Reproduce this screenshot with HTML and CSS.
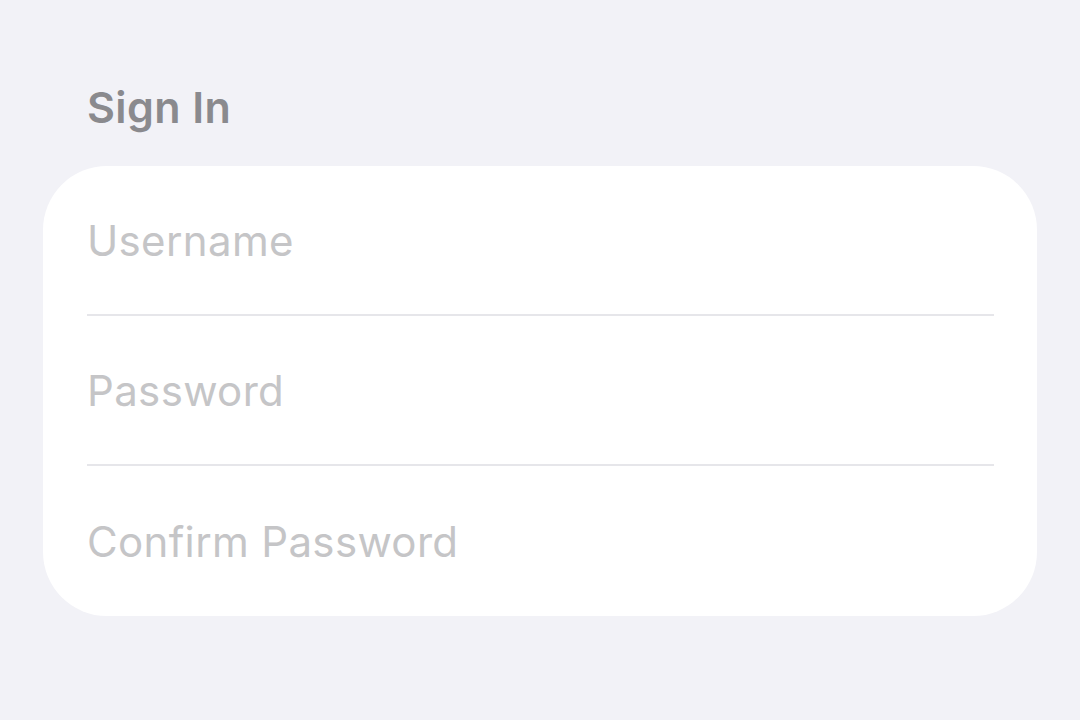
FILE: index.html
```html
<!DOCTYPE html>
<html lang="en">
<head>
  <meta charset="UTF-8">
  <meta name="viewport" content="width=device-width, initial-scale=1.0">
  <title>Sign In</title>
  <link rel="stylesheet" href="styles.css">
</head>
<body>

  <section class="form-section">
    <h2 class="section-title">Sign In</h2>

    <div class="card">
      <div class="row">
        <input type="text" id="username" placeholder="Username">
      </div>
      <div class="row">
        <input type="password" id="password" placeholder="Password">
      </div>
      <div class="row">
        <input type="password" id="confirm" placeholder="Confirm Password">
      </div>
    </div>
  </section>

</body>
</html>
```

FILE: styles.css
```css
body {
  font-family: 'Inter', 'Liberation Sans', sans-serif;
  background: #f2f2f7;
  color: #000;
  margin: 0;
  padding: 0;
}

.form-section {
  padding: 83px 43px 0;
}

.section-title {
  margin: 0 0 35px 44px;
  font-size: 43px;
  line-height: 48px;
  font-weight: 600;
  color: #8a8a8e;
  letter-spacing: 0.4px;
}

.card {
  background: #fff;
  border-radius: 64px;
  overflow: hidden;
}

.row {
  display: flex;
  align-items: center;
  height: 148px;
  margin: 0 43px 0 44px;
  border-bottom: 2px solid #e6e6ea;
}

.row:last-child {
  border-bottom: none;
  height: 150px;
}

.row input {
  width: 100%;
  border: none;
  outline: none;
  background: transparent;
  padding: 0;
  font-family: inherit;
  font-size: 42px;
  letter-spacing: 0.35px;
  color: #000;
}

.row input::placeholder {
  color: #c5c5c7;
}
```
